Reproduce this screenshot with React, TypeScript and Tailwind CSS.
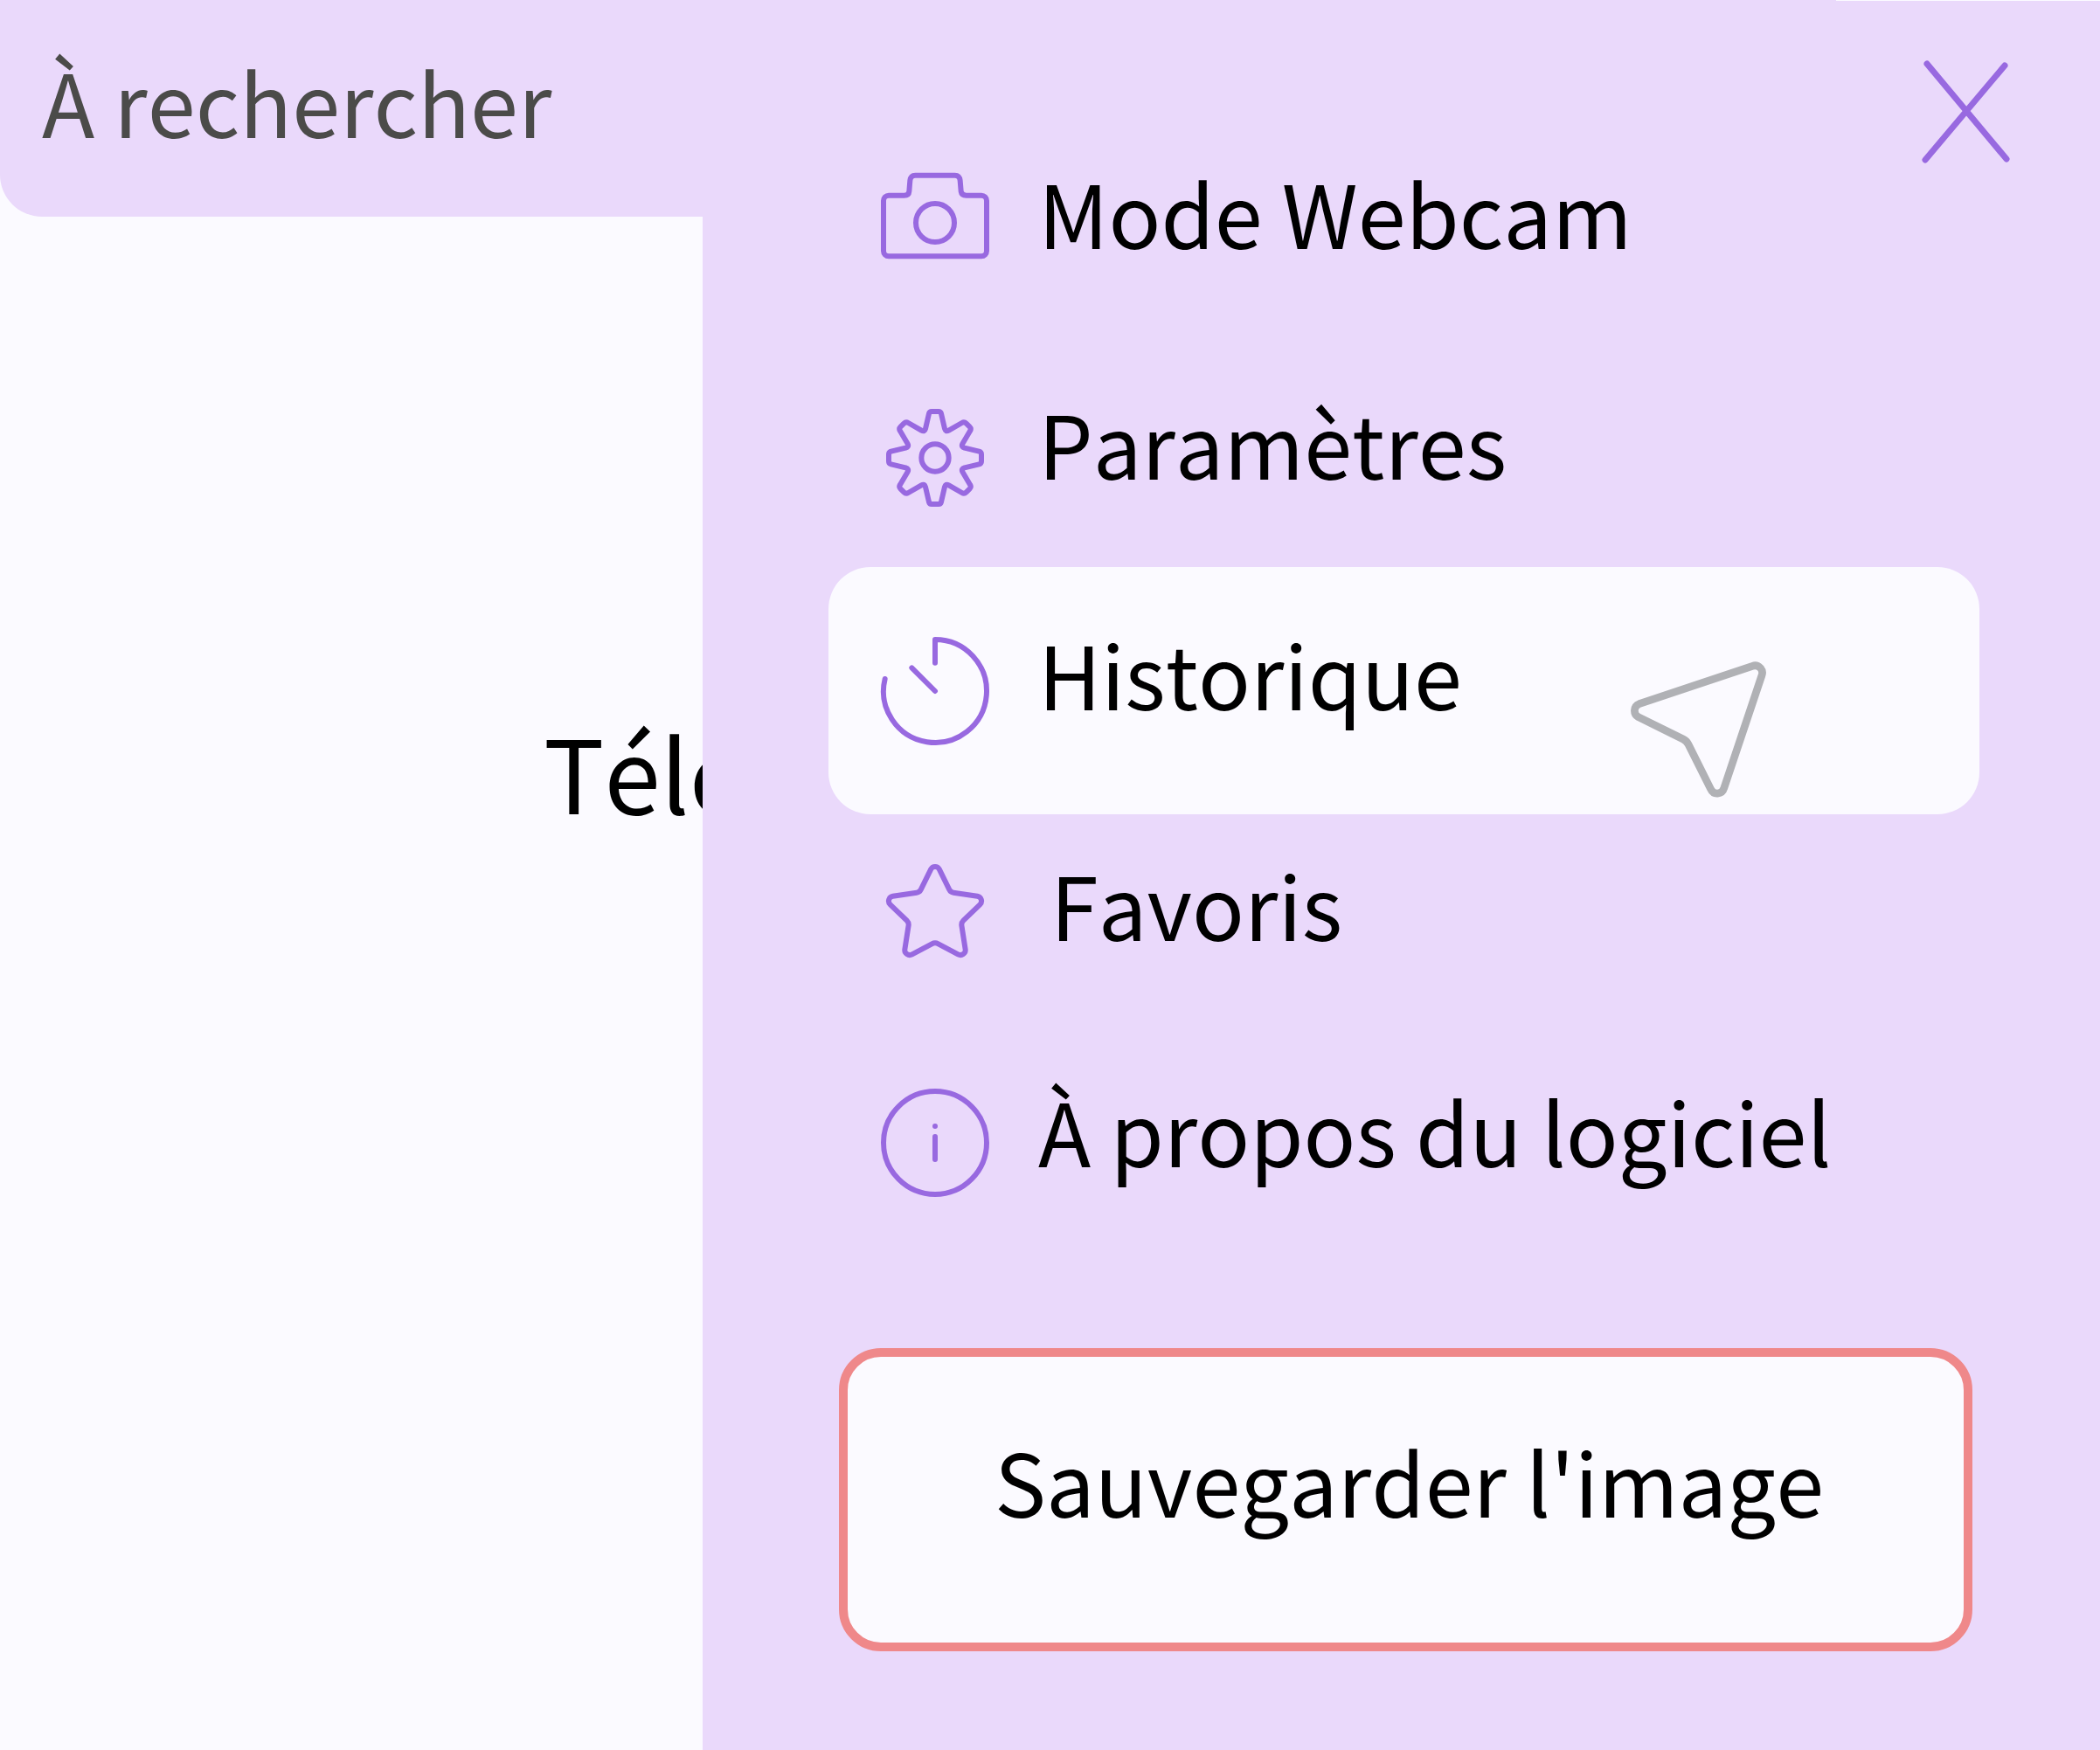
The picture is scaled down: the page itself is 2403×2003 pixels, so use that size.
import type { ReactNode } from "react";

type Item = { label: string; viewBox: string; icon: ReactNode; row: string; text: string; active?: boolean };

const items: Item[] = [
  {
    label: "Mode Webcam",
    viewBox: "0 6 540 540",
    row: "h-[264px]",
    text: "",
    icon: (
      <>
        <path d="M111 161H164Q180 161 181 147L184 110Q186 92 202 92H338Q354 92 356 110L359 147Q361 161 377 161H429A18 18 0 0 1 447 179V352A18 18 0 0 1 429 370H111A18 18 0 0 1 93 352V179A18 18 0 0 1 111 161Z" />
        <circle cx="270" cy="255" r="66" />
      </>
    ),
  },
  {
    label: "Paramètres",
    viewBox: "0 -12 540 540",
    row: "h-[264px]",
    text: "",
    icon: (
      <>
        <path d="M258 93H282Q289 93 291 100L303 152Q306 164 317 158L362 132Q370 127 377 134L389 146Q395 152 390 160L364 204Q359 214 371 218L421 230Q429 232 429 240V264Q429 272 421 274L371 286Q359 290 364 300L390 344Q395 352 389 358L377 370Q370 377 362 372L317 346Q306 340 303 352L291 404Q289 411 282 411H258Q251 411 249 404L237 352Q234 340 223 346L178 372Q170 377 163 370L151 358Q145 352 150 344L176 300Q181 290 169 286L119 274Q111 272 111 264V240Q111 232 119 230L169 218Q181 214 176 204L150 160Q145 152 151 146L163 134Q170 127 178 132L223 158Q234 164 237 152L249 100Q251 93 258 93Z" />
        <circle cx="270" cy="252" r="47" />
      </>
    ),
  },
  {
    label: "Historique",
    viewBox: "0 0 540 540",
    row: "h-[264px]",
    text: "",
    active: true,
    icon: <path d="M270 176V96A177 177 0 1 1 98 231M190 193L270 273" />,
  },
  {
    label: "Favoris",
    viewBox: "0 12 540 540",
    row: "h-[259px]",
    text: "pl-3.5",
    icon: (
      <path d="M256 104A16 16 0 0 1 284 104L319 175Q323 184 333 185L415 197A17 17 0 0 1 424 226L367 281Q360 288 361 297L374 380A17 17 0 0 1 349 397L281 361Q270 355 259 361L191 397A17 17 0 0 1 166 380L179 297Q180 288 173 281L116 226A17 17 0 0 1 125 197L207 185Q217 184 221 175Z" />
    ),
  },
  {
    label: "À propos du logiciel",
    viewBox: "0 9 540 540",
    row: "h-[264px]",
    text: "",
    icon: (
      <>
        <circle cx="270" cy="264" r="177" />
        <path d="M270 207V207.1M270 243V321" />
      </>
    ),
  },
];

function Pointer() {
  return (
    <svg
      aria-hidden="true"
      viewBox="0 0 660 600"
      className="pointer-events-none absolute top-[81px] left-[892px] h-[200px] w-[220px] fill-none stroke-[#b0b1b5] stroke-[26]"
      strokeLinejoin="round"
    >
      <path d="M496 97L107 227A25 25 0 0 0 104 272L258 348Q270 354 276 366L353 520A24 24 0 0 0 398 517L528 129A25 25 0 0 0 496 97Z" />
    </svg>
  );
}

export default function App() {
  return (
    <div className="relative min-h-screen overflow-hidden bg-[#fbfaff] font-['Noto_Sans_CJK_JP','Noto_Sans',sans-serif] text-[99px] text-black [font-kerning:none]">
      <header className="w-[87.43%]">
        <input
          type="search"
          aria-label="Rechercher"
          placeholder="À rechercher"
          className="block h-[248px] w-full rounded-b-[48px] bg-[#ead9fb] pb-[18px] pl-12 text-[#4b4b49] outline-none [font-kerning:none] placeholder:text-[#4b4b49]"
        />
      </header>
      <main className="pt-[549px] pl-[622px]">
        <h1 className="text-[116px] leading-[168px] whitespace-nowrap">Télécharger</h1>
      </main>

      <aside className="absolute top-px right-0 bottom-0 w-[66.54%] bg-[#ead9fb] pt-[120px] pr-[138px] pl-36">
        <button type="button" aria-label="Fermer" className="absolute top-[63px] right-[88px] size-32">
          <svg viewBox="0 0 128 128" className="size-full fill-none stroke-[#9869e0] stroke-[7]" strokeLinecap="round">
            <path d="M18 9L109 118M107 11L16 119" />
          </svg>
        </button>
        <nav>
          <ul>
            {items.map((item) => (
              <li key={item.label} className={item.row}>
                <button
                  type="button"
                  className={
                    "relative flex h-[283px] w-full items-start gap-7 rounded-[48px] pt-[51px] pl-8 text-left [font-kerning:none] " +
                    (item.active ? "bg-[#fbfaff]" : "")
                  }
                >
                  <svg
                    aria-hidden="true"
                    viewBox={item.viewBox}
                    className="size-[180px] shrink-0 fill-none stroke-[#9869e0] stroke-[18]"
                    strokeLinecap="round"
                    strokeLinejoin="round"
                  >
                    {item.icon}
                  </svg>
                  <span className={"leading-[140px] whitespace-nowrap " + item.text}>{item.label}</span>
                  {item.active && <Pointer />}
                </button>
              </li>
            ))}
          </ul>
        </nav>
        <div className="mt-[107px] pr-2 pl-3">
          <button
            type="button"
            className="h-[347px] w-full rounded-[48px] border-[10px] border-[#ef888a] bg-[#fbfaff] pb-[45px] pl-2 leading-[140px] whitespace-nowrap [font-kerning:none]"
          >
            Sauvegarder l'image
          </button>
        </div>
      </aside>
    </div>
  );
}
